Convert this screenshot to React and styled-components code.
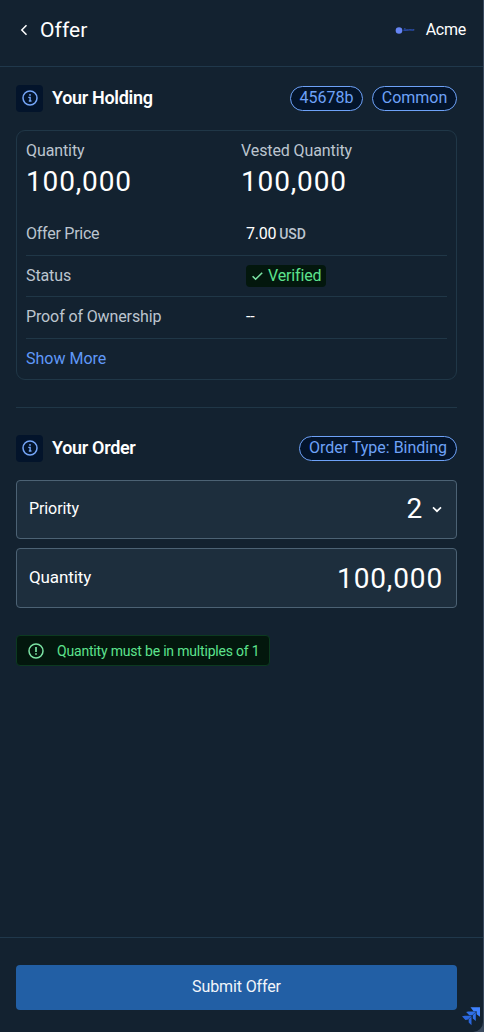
import React from 'react';
import styled, { createGlobalStyle } from 'styled-components';

const GlobalStyle = createGlobalStyle`
  * {
    box-sizing: border-box;
  }
  body {
    margin: 0;
    background: #3a4a5e;
    font-family: Roboto, 'Liberation Sans', sans-serif;
    font-size: 16px;
    letter-spacing: -0.1px;
    color: #ffffff;
  }
`;

const Page = styled.div`
  display: flex;
  flex-direction: column;
  width: 483px;
  height: 1032px;
  background: #132230;
  border-bottom-right-radius: 10px;
  overflow: hidden;
`;

const Header = styled.header`
  display: flex;
  align-items: center;
  height: 67px;
  padding: 0 17px 7px 20px;
  border-bottom: 1px solid #20384b;
`;

const BackIcon = styled.svg`
  width: 8px;
  height: 12px;
  margin-right: 12px;
`;

const Title = styled.h1`
  flex: 1;
  margin: 0;
  font-size: 21px;
  line-height: 24px;
  font-weight: 400;
  letter-spacing: 0.1px;
`;

const CompanyLogo = styled.svg`
  width: 21px;
  height: 8px;
  margin-right: 10px;
`;

const CompanyName = styled.span`
  font-size: 16px;
  line-height: 20px;
  letter-spacing: -0.25px;
`;

const Content = styled.main`
  flex: 1;
  padding: 18px 26px 0 16px;
`;

const SectionHeader = styled.div`
  display: flex;
  align-items: center;
  height: 27px;
  margin-bottom: 18px;
`;

const InfoBox = styled.span`
  display: flex;
  align-items: center;
  justify-content: center;
  width: 27px;
  height: 27px;
  padding-bottom: 1px;
  border-radius: 4px;
  background: #03142b;
`;

const SectionTitle = styled.h2`
  flex: 1;
  margin: 0 0 0 9px;
  padding-bottom: 2px;
  font-size: 18px;
  line-height: 24px;
  font-weight: 650;
  letter-spacing: -0.32px;
`;

const Pill = styled.span`
  width: ${({ $width }) => $width};
  height: 25px;
  margin-left: 9px;
  border: 1px solid #6ea2f8;
  border-radius: 13px;
  background: #03142b;
  color: #6ea2f8;
  font-size: 16px;
  line-height: 22px;
  letter-spacing: 0;
  text-align: center;
  white-space: nowrap;
`;

const Card = styled.section`
  height: 250px;
  padding: 8px 9px 0;
  border: 1px solid #203747;
  border-radius: 9px;
`;

const Totals = styled.div`
  display: grid;
  grid-template-columns: 215px 1fr;
  height: 75px;
`;

const TotalLabel = styled.div`
  color: #bcc5cf;
  line-height: 24px;
`;

const TotalValue = styled.div`
  font-size: 28px;
  line-height: 38px;
  letter-spacing: 0.85px;
`;

const Row = styled.div`
  display: grid;
  grid-template-columns: 220px 1fr;
  align-items: center;
  height: ${({ $height }) => $height || '41px'};
  border-bottom: 1px solid #203747;
`;

const RowLabel = styled.span`
  padding-bottom: 2px;
  color: #bcc5cf;
  letter-spacing: ${({ $spacing }) => $spacing || '-0.12px'};
`;

const RowValue = styled.span`
  padding-bottom: 2px;
  letter-spacing: -0.25px;
`;

const Currency = styled.span`
  margin-left: 3px;
  color: #bcc5cf;
  font-size: 14px;
  font-weight: 500;
  letter-spacing: 0;
`;

const Verified = styled.span`
  display: inline-flex;
  align-items: center;
  justify-self: start;
  width: 80px;
  height: 22px;
  padding-left: 6px;
  border-radius: 4px;
  background: #03170d;
  color: #5de38e;
  line-height: 22px;
  letter-spacing: -0.15px;

  svg {
    margin-right: 5px;
  }
`;

const ShowMore = styled.button`
  display: block;
  padding: 0;
  border: 0;
  background: none;
  color: #6099f8;
  font: inherit;
  line-height: 40px;
`;

const Divider = styled.hr`
  height: 1px;
  margin: 27px 0;
  border: 0;
  background: #203747;
`;

const Field = styled.label`
  display: flex;
  align-items: center;
  height: ${({ $height }) => $height};
  margin-bottom: 9px;
  padding: 0 13px 2px 12px;
  border: 1px solid #4c6274;
  border-radius: 4px;
  background: #1d2e3d;
`;

const FieldLabel = styled.span`
  flex: 1;
  font-size: ${({ $size }) => $size || '16px'};
  font-weight: ${({ $weight }) => $weight || 400};
`;

const FieldValue = styled.span`
  padding-top: ${({ $offset }) => $offset || '0'};
  font-size: 28px;
  line-height: 36px;
  letter-spacing: 0.85px;
`;

const SelectArrow = styled.svg`
  width: 10px;
  height: 7px;
  margin: 1px 1px 0 9px;
`;

const Notice = styled.div`
  display: flex;
  align-items: center;
  width: 254px;
  height: 31px;
  margin-top: 27px;
  padding-left: 11px;
  border: 1px solid #0c3a20;
  border-radius: 4px;
  background: #03170d;
  color: #5de38e;
  font-size: 14px;
  letter-spacing: -0.19px;
  white-space: nowrap;

  svg {
    margin-right: 13px;
  }
`;

const Footer = styled.footer`
  position: relative;
  height: 95px;
  padding: 27px 26px 0 16px;
  border-top: 1px solid #20384b;
`;

const SubmitButton = styled.button`
  display: block;
  width: 100%;
  height: 45px;
  padding: 0 0 2px;
  border: 0;
  border-radius: 4px;
  background: #225fa5;
  color: #f1f5fa;
  font: inherit;
  letter-spacing: -0.12px;
`;

const CornerMark = styled.svg`
  position: absolute;
  right: 3px;
  bottom: 6px;
  width: 18px;
  height: 19px;
`;

const InfoIcon = () => (
  <svg width="16" height="16" viewBox="0 0 16 16" fill="none" stroke="#75a5f7" strokeWidth="1.5">
    <circle cx="8" cy="8" r="7" />
    <path d="M6.3 7.4h1.8v3.6M6.8 11h2.7" strokeWidth="1.4" />
    <circle cx="8" cy="4.9" r="0.9" fill="#75a5f7" stroke="none" />
  </svg>
);

const NoticeIcon = () => (
  <svg width="16" height="16" viewBox="0 0 16 16" fill="none" stroke="#7ce3a4" strokeWidth="1.5">
    <circle cx="8" cy="8" r="7" />
    <path d="M8 4v5M8 10.3v1.5" strokeWidth="1.7" />
  </svg>
);

const CheckIcon = () => (
  <svg width="11" height="9" viewBox="0 0 11 9" fill="none" stroke="#7ce3a4" strokeWidth="1.6">
    <path d="M0.6 4.2l3 3L10.2 0.8" />
  </svg>
);

const Total = ({ label, value }) => (
  <div>
    <TotalLabel>{label}</TotalLabel>
    <TotalValue>{value}</TotalValue>
  </div>
);

class App extends React.Component {
  render() {
    return (
      <Page>
        <GlobalStyle />
        <Header>
          <BackIcon viewBox="0 0 8 12" fill="none" stroke="#ffffff" strokeWidth="1.5">
            <path d="M6.5 1.2L1.8 6l4.7 4.8" />
          </BackIcon>
          <Title>Offer</Title>
          <CompanyLogo viewBox="0 0 21 8">
            <circle cx="4" cy="4.5" r="3.3" fill="#6685f4" />
            <text x="8.5" y="4.5" fontSize="4" fontWeight="700" textLength="11" lengthAdjust="spacingAndGlyphs" fill="#3055bd">Acme</text>
          </CompanyLogo>
          <CompanyName>Acme</CompanyName>
        </Header>
        <Content>
          <SectionHeader>
            <InfoBox><InfoIcon /></InfoBox>
            <SectionTitle>Your Holding</SectionTitle>
            <Pill $width="73px">45678b</Pill>
            <Pill $width="85px">Common</Pill>
          </SectionHeader>
          <Card>
            <Totals>
              <Total label="Quantity" value="100,000" />
              <Total label="Vested Quantity" value="100,000" />
            </Totals>
            <Row $height="42px">
              <RowLabel $spacing="-0.25px">Offer Price</RowLabel>
              <RowValue>
                7.00
                <Currency>USD</Currency>
              </RowValue>
            </Row>
            <Row>
              <RowLabel>Status</RowLabel>
              <Verified>
                <CheckIcon />
                Verified
              </Verified>
            </Row>
            <Row $height="42px">
              <RowLabel>Proof of Ownership</RowLabel>
              <RowValue>--</RowValue>
            </Row>
            <ShowMore type="button">Show More</ShowMore>
          </Card>
          <Divider />
          <SectionHeader>
            <InfoBox><InfoIcon /></InfoBox>
            <SectionTitle>Your Order</SectionTitle>
            <Pill $width="158px">Order Type: Binding</Pill>
          </SectionHeader>
          <Field $height="59px">
            <FieldLabel>Priority</FieldLabel>
            <FieldValue>2</FieldValue>
            <SelectArrow viewBox="0 0 10 7" fill="none" stroke="#ffffff" strokeWidth="1.7">
              <path d="M1 1.3l4 3.9 4-3.9" />
            </SelectArrow>
          </Field>
          <Field $height="60px">
            <FieldLabel $size="17px" $weight={450}>Quantity</FieldLabel>
            <FieldValue $offset="4px">100,000</FieldValue>
          </Field>
          <Notice>
            <NoticeIcon />
            Quantity must be in multiples of 1
          </Notice>
        </Content>
        <Footer>
          <SubmitButton type="button">Submit Offer</SubmitButton>
          <CornerMark viewBox="0 0 18 19">
            <path d="M0 9.3l3-.6h6.5v9.5l-2.8-2.6v-3L3.4 12.9z" fill="#2a66dc" />
            <path d="M4.1 5l2.2-.5h7.5v9.6l-3-2.7V8.2H7.3z" fill="#2f70e8" />
            <path d="M8.5 0.3H18v9.4l-3.4-2.4V4.2h-3.1z" fill="#3f82ff" />
            <path d="M9.9 8.9L14 4.8M5.6 13.2L9.9 8.9" stroke="#132230" strokeWidth="0.5" />
          </CornerMark>
        </Footer>
      </Page>
    );
  }
}

export default App;
